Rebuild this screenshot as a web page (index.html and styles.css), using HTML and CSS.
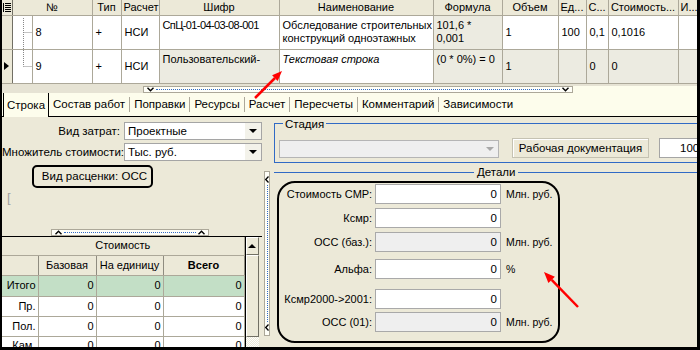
FILE: index.html
```html
<!DOCTYPE html>
<html>
<head>
<meta charset="utf-8">
<link rel="stylesheet" href="styles.css">
</head>
<body>
<div class="frame">
  <table class="grid">
    <colgroup>
      <col class="g-ind"><col class="g-tree"><col class="g-no"><col class="g-type"><col class="g-calc"><col class="g-code"><col class="g-name"><col class="g-form"><col class="g-vol"><col class="g-unit"><col class="g-c"><col class="g-cost"><col class="g-i">
    </colgroup>
    <tr class="hdr">
      <th class="ind"><svg width="10" height="13" viewBox="0 0 10 13"><path d="M1.5 2v9" stroke="#000" stroke-width="1"/><path d="M3 2.5h6M3 4.5h6M3 6.5h6M3 8.5h6M3 10.5h6" stroke="#000" stroke-width="1"/></svg></th>
      <th colspan="2">№</th><th>Тип</th><th>Расчет</th><th>Шифр</th><th>Наименование</th><th>Формула</th><th>Объем</th><th>Ед...</th><th>С...</th><th>Стоимость...</th><th>И...</th>
    </tr>
    <tr>
      <td class="ind"></td>
      <td class="tree"><svg width="20" height="33" viewBox="0 0 20 33"><path d="M10.5 2V33M10.5 16.5H20" stroke="#888" stroke-width="1" stroke-dasharray="1 1"/></svg></td>
      <td>8</td><td>+</td><td>НСИ</td>
      <td class="top code">СпЦ-01-04-03-08-001</td>
      <td class="top">Обследование строительных<br>конструкций одноэтажных</td>
      <td class="top shade">101,6 *<br>0,001</td>
      <td>1</td><td><div class="clip">100 м2</div></td><td>0,1</td><td>0,1016</td><td></td>
    </tr>
    <tr>
      <td class="ind"><i class="cur"></i></td>
      <td class="tree"><svg width="20" height="33" viewBox="0 0 20 33"><path d="M10.5 0V16.5M10.5 16.5H20" stroke="#888" stroke-width="1" stroke-dasharray="1 1"/></svg></td>
      <td>9</td><td>+</td><td>НСИ</td>
      <td class="top shade">Пользовательский-</td>
      <td class="top ital">Текстовая строка</td>
      <td class="top shade">(0 * 0%) = 0</td>
      <td class="shade">1</td><td class="shade"></td><td class="shade">0</td><td class="shade">0</td><td class="shade"></td>
    </tr>
  </table>

  <div class="gridfoot">
    <div class="hsplit wide">
      <svg class="chev" width="7" height="5" viewBox="0 0 7 5"><path d="M0.5 0.8L3.5 3.8L6.5 0.8" fill="none" stroke="#000" stroke-width="1.4"/></svg>
      <span class="dots"></span>
      <svg class="chev" width="7" height="5" viewBox="0 0 7 5"><path d="M0.5 0.8L3.5 3.8L6.5 0.8" fill="none" stroke="#000" stroke-width="1.4"/></svg>
    </div>
    <div class="gridfoot-rest"></div>
  </div>

  <div class="tabs">
    <div class="tab active">Строка</div>
    <div class="tab">Состав работ</div><span class="sep"></span>
    <div class="tab">Поправки</div><span class="sep"></span>
    <div class="tab">Ресурсы</div><span class="sep"></span>
    <div class="tab">Расчет</div><span class="sep"></span>
    <div class="tab">Пересчеты</div><span class="sep"></span>
    <div class="tab">Комментарий</div><span class="sep"></span>
    <div class="tab">Зависимости</div>
  </div>

  <div class="panel">
    <div class="left">
      <div class="frm-row">
        <span class="frm-label">Вид затрат:</span>
        <div class="combo"><span class="combo-text">Проектные</span><span class="combo-btn"><i class="tri"></i></span></div>
      </div>
      <div class="frm-row second">
        <span class="frm-label">Множитель стоимости:</span>
        <div class="combo"><span class="combo-text">Тыс. руб.</span><span class="combo-btn"><i class="tri"></i></span></div>
      </div>
      <div class="rate-box">Вид расценки: ОСС</div>
      <div class="bracket">[</div>
      <div class="spacer"></div>
      <div class="hsplit small">
        <svg class="chev" width="7" height="5" viewBox="0 0 7 5"><path d="M0.5 4.2L3.5 1.2L6.5 4.2" fill="none" stroke="#000" stroke-width="1.4"/></svg>
        <span class="dots"></span>
        <svg class="chev" width="7" height="5" viewBox="0 0 7 5"><path d="M0.5 4.2L3.5 1.2L6.5 4.2" fill="none" stroke="#000" stroke-width="1.4"/></svg>
      </div>
      <div class="cost">
        <table class="ctab">
          <colgroup><col class="k1"><col class="k2"><col class="k3"><col class="k4"></colgroup>
          <tr><th colspan="4" class="cap">Стоимость</th></tr>
          <tr class="sub"><th></th><th>Базовая</th><th>На единицу</th><th class="bold">Всего</th></tr>
          <tr class="tot"><td>Итого</td><td>0</td><td>0</td><td>0</td></tr>
          <tr><td>Пр.</td><td>0</td><td>0</td><td>0</td></tr>
          <tr><td>Пол.</td><td>0</td><td>0</td><td>0</td></tr>
          <tr class="last"><td>Кам.</td><td>0</td><td>0</td><td>0</td></tr>
        </table>
        <div class="vscroll">
          <div class="sb-btn"><i class="tri-up"></i></div>
          <div class="sb-thumb"></div>
          <div class="sb-track"></div>
        </div>
      </div>
    </div>

    <div class="vsplit">
      <svg width="4" height="7" viewBox="0 0 4 7"><path d="M3.5 0.5L0.7 3.5L3.5 6.5" fill="none" stroke="#000" stroke-width="1.3"/></svg>
      <span class="vdots"></span>
      <svg width="4" height="7" viewBox="0 0 4 7"><path d="M3.5 0.5L0.7 3.5L3.5 6.5" fill="none" stroke="#000" stroke-width="1.3"/></svg>
    </div>

    <div class="right">
      <fieldset class="stage">
        <legend>Стадия</legend>
        <div class="combo dis"><span class="combo-text"></span><span class="combo-btn"><i class="tri"></i></span></div>
        <div class="btn">Рабочая документация</div>
        <div class="edit">100</div>
      </fieldset>

      <div class="details-line"><span class="ln first"></span><span class="dl-text">Детали</span><span class="ln"></span></div>

      <div class="round">
        <div class="frow m1"><span class="flabel">Стоимость СМР:</span><span class="fin">0</span><span class="unit">Млн. руб.</span></div>
        <div class="frow m4"><span class="flabel">Ксмр:</span><span class="fin">0</span></div>
        <div class="frow m4"><span class="flabel">ОСС (баз.):</span><span class="fin ro">0</span><span class="unit">Млн. руб.</span></div>
        <div class="frow m7"><span class="flabel">Альфа:</span><span class="fin">0</span><span class="unit">%</span></div>
        <div class="frow m10"><span class="flabel">Ксмр2000-&gt;2001:</span><span class="fin">0</span></div>
        <div class="frow m3"><span class="flabel">ОСС (01):</span><span class="fin ro">0</span><span class="unit">Млн. руб.</span></div>
      </div>
    </div>
  </div>
</div>

<svg class="arrows" width="700" height="350" viewBox="0 0 700 350">
  <path d="M255 98L275 78" stroke="#f00" stroke-width="2.5"/>
  <polygon points="282,71 277.7,80.9 272.1,75.3" fill="#f00"/>
  <path d="M578 307L551.7 279.9" stroke="#f00" stroke-width="2.5"/>
  <polygon points="544,272 554.9,276.8 548.4,283" fill="#f00"/>
</svg>
</body>
</html>
```

FILE: styles.css
```css
* { box-sizing: border-box; }
html, body { margin: 0; padding: 0; }
body {
  position: relative;
  width: 700px;
  height: 350px;
  overflow: hidden;
  font-family: "Liberation Sans", Arial, sans-serif;
  font-size: 11px;
  color: #000;
  background: #ece9d8;
}
.frame {
  width: 700px;
  height: 350px;
  border-left: 2px solid #000;
  border-right: 3px solid #000;
  border-bottom: 3px solid #000;
  background: #ece9d8;
  display: flex;
  flex-direction: column;
  overflow: hidden;
}

/* ---------- top grid ---------- */
.grid {
  table-layout: fixed;
  border-collapse: collapse;
  width: 695px;
  flex: none;
  background: #fff;
}
.g-ind { width: 10px; } .g-tree { width: 20px; } .g-no { width: 60px; }
.g-type { width: 29px; } .g-calc { width: 38px; } .g-code { width: 120px; }
.g-name { width: 154px; } .g-form { width: 69px; } .g-vol { width: 56px; }
.g-unit { width: 28px; } .g-c { width: 22px; } .g-cost { width: 70px; } .g-i { width: 19px; }

.grid th, .grid td {
  border-right: 1px solid #aca899;
  border-bottom: 1px solid #aca899;
  padding: 0 3px;
  overflow: hidden;
  white-space: nowrap;
  font-weight: normal;
  line-height: 13px;
}
.grid th {
  height: 15px;
  background: #ece9d8;
  text-align: center;
  padding: 0 2px;
}
.grid td {
  height: 34px;
  background: #fff;
  vertical-align: middle;
  text-align: left;
}
.grid .ind {
  background: #ece9d8;
  padding: 0;
  border-right: 1px solid #716f64;
  vertical-align: middle;
}
.grid th.ind svg { display: block; margin: 1px 0 0 0; }
.grid td.tree { padding: 0; vertical-align: top; }
.grid td.tree svg { display: block; }
.grid td.top { vertical-align: top; padding-top: 3px; }
.grid td.shade { background: #ecebe1; }
.grid td.ital { font-style: italic; }
.grid td.code { letter-spacing: -0.6px; }
.clip { width: 100%; overflow: hidden; white-space: nowrap; }
.cur {
  display: block;
  width: 0; height: 0;
  margin-left: 2px;
  border-top: 4px solid transparent;
  border-bottom: 4px solid transparent;
  border-left: 5px solid #000;
}

/* ---------- splitter strip ---------- */
.gridfoot {
  height: 9px;
  flex: none;
  display: flex;
  align-items: flex-end;
  padding-left: 141px;
  background: #e6e3d4;
}
.gridfoot-rest {
  flex: 1;
  height: 7px;
  background: #fdfdec;
}
.hsplit {
  display: flex;
  align-items: center;
  gap: 2px;
  height: 7px;
  padding: 0 3px;
  border: 1px solid #aca899;
  background: #fffff8;
}
.hsplit.wide { width: 430px; }
.hsplit.small { width: 158px; margin-left: 49px; flex: none; }
.dots { flex: 1; height: 0; border-top: 1px dotted #316ac5; }
.chev { display: block; flex: none; }

/* ---------- tabs ---------- */
.tabs {
  height: 24px;
  flex: none;
  display: flex;
  align-items: stretch;
  background: #fdfdec;
  border-bottom: 1px solid #000;
  font-size: 11.5px;
}
.tab {
  display: flex;
  align-items: center;
  padding: 0 4px;
  white-space: nowrap;
}
.tab.active {
  margin-left: 1px;
  margin-bottom: -1px;
  padding: 0 3px;
  border-left: 1px solid #000;
  border-right: 1px solid #000;
  background: #fdfdec;
}
.sep {
  width: 1px;
  height: 15px;
  align-self: center;
  background: #aca899;
}

/* ---------- panel ---------- */
.panel {
  flex: 1;
  display: flex;
  min-height: 0;
}
.left {
  width: 260px;
  flex: none;
  display: flex;
  flex-direction: column;
  padding-top: 5px;
}
.frm-row {
  display: flex;
  align-items: center;
  height: 18px;
}
.frm-row.second { margin-top: 3px; }
.frm-label {
  width: 120px;
  padding-right: 2px;
  text-align: right;
  white-space: nowrap;
  font-size: 11.5px;
}
.combo {
  display: flex;
  width: 138px;
  height: 18px;
  margin-left: 2px;
  border: 1px solid #a5a5a5;
  background: #fff;
}
.combo-text {
  flex: 1;
  padding-left: 3px;
  line-height: 16px;
  font-size: 11.5px;
}
.combo-btn {
  width: 16px;
  display: flex;
  align-items: center;
  justify-content: center;
  background: #f3f2ea;
}
.tri {
  width: 0; height: 0;
  border-left: 4px solid transparent;
  border-right: 4px solid transparent;
  border-top: 4px solid #000;
}
.combo.dis { width: 220px; margin: 2px 0 0 0; background: #efefef; border-color: #b5b5b5; }
.combo.dis .combo-btn { background: #efefef; }
.combo.dis .tri { border-top-color: #a8a8a8; }

.rate-box {
  margin: 4px 0 0 30px;
  width: 121px;
  height: 23px;
  border: 2px solid #000;
  border-radius: 5px;
  text-align: right;
  padding-right: 4px;
  line-height: 19px;
  font-size: 11.5px;
}
.bracket {
  margin: 3px 0 0 5px;
  height: 14px;
  color: #a0a0a0;
  font-size: 13px;
  line-height: 14px;
}
.spacer { flex: 1; }

/* ---------- cost table ---------- */
.cost {
  flex: none;
  display: flex;
  height: 111px;
  overflow: hidden;
  border-top: 1px solid #000;
}
.ctab {
  table-layout: fixed;
  border-collapse: collapse;
  width: 242px;
  flex: none;
  align-self: flex-start;
}
.k1 { width: 36px; } .k2 { width: 58px; } .k3 { width: 67px; } .k4 { width: 81px; }
.ctab th, .ctab td {
  border-right: 1px solid #aca899;
  border-bottom: 1px solid #aca899;
  padding: 0 2px;
  white-space: nowrap;
  overflow: hidden;
  font-weight: normal;
  line-height: 13px;
}
.ctab th { background: #ece9d8; text-align: center; }
.ctab th.cap { height: 18px; }
.ctab tr.sub th { height: 20px; border-right-color: #8f8c80; }
.ctab th.bold { font-weight: bold; }
.ctab td { height: 20px; background: #fff; text-align: right; }
.ctab tr.tot td { height: 21px; background: #c3dfc6; }
.ctab tr.last td { vertical-align: top; padding-top: 2px; }

.vscroll {
  width: 14px;
  flex: none;
  display: flex;
  flex-direction: column;
  border-left: 1px solid #000;
}
.sb-btn {
  height: 18px;
  flex: none;
  display: flex;
  align-items: center;
  justify-content: center;
  background: #ece9d8;
  border: 1px solid;
  border-color: #fff #716f64 #716f64 #fff;
}
.tri-up {
  width: 0; height: 0;
  border-left: 4px solid transparent;
  border-right: 4px solid transparent;
  border-bottom: 4px solid #000;
}
.sb-thumb {
  height: 82px;
  flex: none;
  background: #ece9d8;
  border: 1px solid;
  border-color: #fff #716f64 #716f64 #fff;
}
.sb-track {
  flex: 1;
  background: repeating-conic-gradient(#fff 0 25%, #ece9d8 0 50%) 0 0 / 2px 2px;
}

/* ---------- vertical splitter ---------- */
.vsplit {
  width: 6px;
  flex: none;
  margin: 54px 0 0 2px;
  height: 165px;
  border: 1px solid #aca899;
  background: #fffff8;
  display: flex;
  flex-direction: column;
  align-items: center;
  padding: 4px 0;
  gap: 2px;
}
.vsplit svg { display: block; flex: none; }
.vdots { flex: 1; width: 0; border-left: 1px dotted #316ac5; }

/* ---------- right panel ---------- */
.right {
  flex: 1;
  min-width: 0;
  overflow: hidden;
  padding-left: 4px;
}
.stage {
  margin: 0;
  width: 440px;
  padding: 7px 0 4px 4px;
  border: 1px solid #316ac5;
  display: flex;
  align-items: flex-start;
}
.stage legend {
  padding: 0 2px;
  margin-left: 4px;
  line-height: 14px;
  font-size: 11.5px;
}
.btn {
  margin-left: 13px;
  width: 137px;
  height: 20px;
  border: 1px solid #c5c2b2;
  box-shadow: inset 1px 1px 0 #fff;
  background: #ece9d8;
  text-align: center;
  line-height: 18px;
  font-size: 11.5px;
}
.edit {
  margin-left: 10px;
  width: 60px;
  height: 20px;
  border: 1px solid #a5a5a5;
  background: #fff;
  line-height: 18px;
  padding-left: 20px;
  font-size: 11.5px;
}
.details-line {
  margin-top: 3px;
  height: 13px;
  display: flex;
  align-items: center;
}
.ln { flex: 1; height: 1px; background: #316ac5; }
.ln.first { flex: none; width: 200px; }
.dl-text { padding: 0 3px; line-height: 13px; font-size: 11.5px; }

.round {
  margin: 2px 0 0 3px;
  width: 283px;
  height: 162px;
  border: 2px solid #000;
  border-radius: 18px;
}
.frow {
  display: flex;
  align-items: center;
  height: 20px;
}
.m1 { margin-top: 1px; } .m3 { margin-top: 3px; } .m4 { margin-top: 4px; }
.m7 { margin-top: 7px; } .m10 { margin-top: 10px; }
.flabel {
  width: 93px;
  text-align: right;
  white-space: nowrap;
  font-size: 11px;
}
.fin {
  margin-left: 3px;
  width: 126px;
  height: 20px;
  border: 1px solid #a9a9a9;
  background: #fff;
  text-align: right;
  padding-right: 3px;
  line-height: 18px;
  font-size: 11.5px;
}
.fin.ro { background: #efefef; }
.unit { margin-left: 5px; white-space: nowrap; font-size: 10.5px; }

/* ---------- annotation arrows ---------- */
.arrows {
  position: absolute;
  left: 0;
  top: 0;
  pointer-events: none;
}
```
